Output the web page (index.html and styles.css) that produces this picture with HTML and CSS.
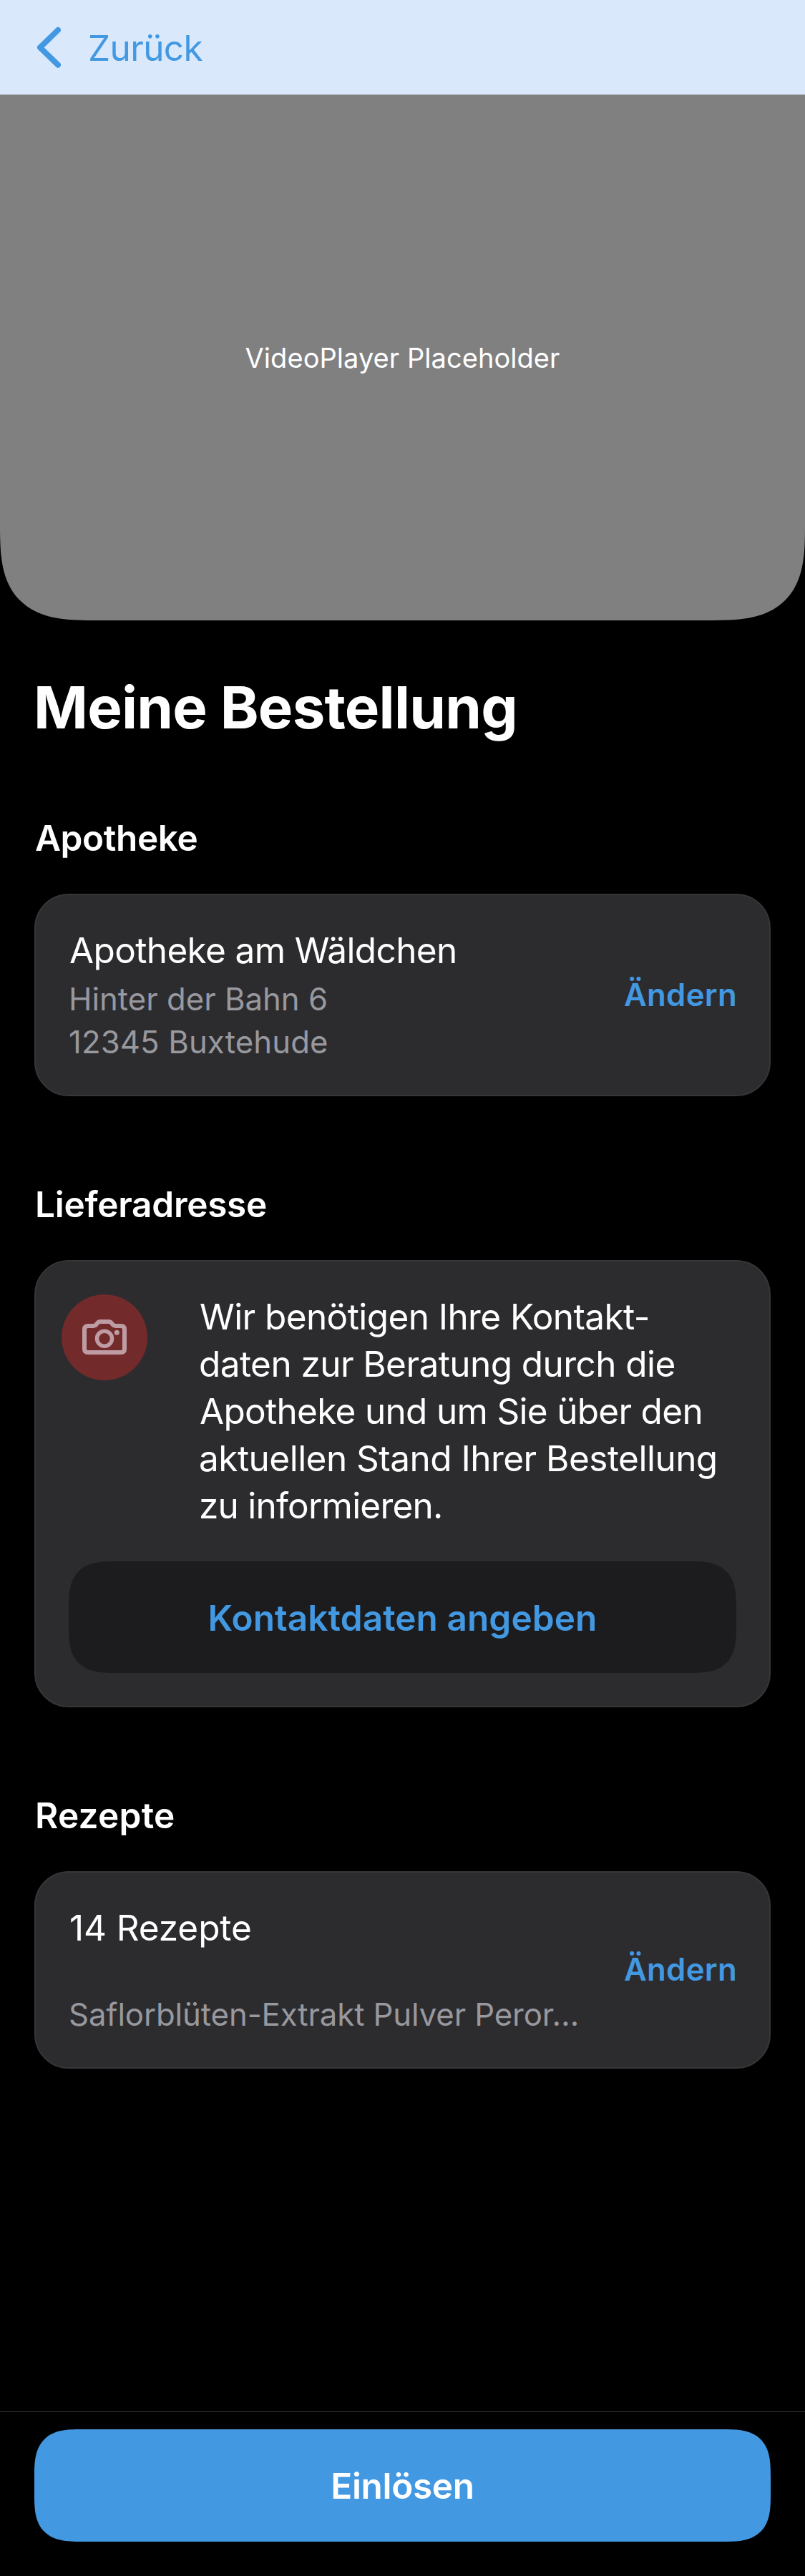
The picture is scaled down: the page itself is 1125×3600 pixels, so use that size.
FILE: index.html
```html
<!DOCTYPE html>
<html lang="de">
<head>
<meta charset="utf-8">
<title>Meine Bestellung</title>
<link rel="stylesheet" href="styles.css">
</head>
<body>
<header class="navbar">
  <svg class="chevron" viewBox="0 0 34 58" aria-hidden="true"><path d="M30 5 5 29.300 30 53.700"/></svg>
  <span class="back">Zurück</span>
</header>
<main class="content">
  <section class="video"><span class="video-label">VideoPlayer Placeholder</span></section>
  <h1 class="title">Meine Bestellung</h1>

  <h2 class="heading">Apotheke</h2>
  <section class="card pharmacy">
    <div class="info">
      <p class="name">Apotheke am Wäldchen</p>
      <p class="detail street">Hinter der Bahn 6</p>
      <p class="detail city">12345 Buxtehude</p>
    </div>
    <span class="change">Ändern</span>
  </section>

  <h2 class="heading delivery">Lieferadresse</h2>
  <section class="card contact">
    <div class="notice">
      <div class="avatar">
        <svg class="camera" viewBox="0 0 62 50" aria-hidden="true">
          <path d="M8 9H15.500C17.500 9 18.500 8.200 19.500 7L21.300 4.900C22.300 3.600 23.200 3 25 3H37C38.800 3 39.700 3.600 40.700 4.900L42.500 7C43.500 8.200 44.500 9 46.500 9H54Q59 9 59 14V41Q59 46 54 46H8Q3 46 3 41V14Q3 9 8 9Z"/>
          <circle class="lens" cx="31" cy="26.700" r="10.500"/>
          <circle class="dot" cx="48.300" cy="18.300" r="3.500"/>
        </svg>
      </div>
      <p class="message"><span class="l1">Wir benötigen Ihre Kontakt-</span><br><span class="l2">daten zur Beratung durch die</span><br><span class="l3">Apotheke und um Sie über den</span><br><span class="l4">aktuellen Stand Ihrer Bestellung</span><br><span class="l5">zu informieren.</span></p>
    </div>
    <div class="button secondary"><span class="contact-label">Kontaktdaten angeben</span></div>
  </section>

  <h2 class="heading prescriptions">Rezepte</h2>
  <section class="card recipes">
    <div class="info">
      <p class="name count">14 Rezepte</p>
      <p class="detail medicine">Saflorblüten-Extrakt Pulver Peror…</p>
    </div>
    <span class="change">Ändern</span>
  </section>
</main>
<footer class="footer">
  <div class="button primary"><span class="redeem">Einlösen</span></div>
</footer>
</body>
</html>
```
FILE: styles.css
```css
* { box-sizing: border-box; margin: 0; padding: 0; }

body {
  width: 1125px;
  height: 3600px;
  display: flex;
  flex-direction: column;
  background: #000;
  color: #fff;
  font: 400 49.5px/60px Inter, "Liberation Sans", sans-serif;
  white-space: nowrap;
}

.navbar {
  height: 133px;
  padding: 37px 0 0 51px;
  display: flex;
  gap: 38px;
  background: #d9e9fb;
  border-bottom: 1px solid #999b9e;
  color: #4398e2;
}
.chevron { width: 34px; height: 58px; flex: none; fill: none; stroke: #4398e2; stroke-width: 8; stroke-linecap: round; stroke-linejoin: round; }
.back { letter-spacing: -0.62px; }

.content { flex: 1; display: flex; flex-direction: column; }

.video {
  height: 734px;
  padding-bottom: 1px;
  display: flex;
  align-items: center;
  justify-content: center;
  background: #808080;
  border-radius: 0 0 130px 130px;
  corner-shape: superellipse(1.52);
}
.video-label { font-size: 38px; line-height: 48px; letter-spacing: 0.06px; }

.title { margin: 72px 47px 0; font-size: 81.5px; line-height: 100px; font-weight: 700; letter-spacing: -0.75px; }
.heading { margin: 102px 49px 48px; font-size: 49.5px; line-height: 60px; font-weight: 600; letter-spacing: -0.39px; }
.delivery { margin-top: 121px; letter-spacing: -0.27px; }
.prescriptions { margin-top: 121px; letter-spacing: 0.28px; }

.card {
  margin: 0 48px;
  background: #2c2c2e;
  border: 2px solid #363638;
  border-radius: 48px;
}
.pharmacy, .recipes { display: flex; align-items: center; justify-content: space-between; padding: 0 46px; }
.pharmacy { height: 283px; }
.recipes { height: 276px; }
.info { align-self: flex-start; padding-top: 47px; }
.name { padding-left: 1px; letter-spacing: -0.64px; }
.count { letter-spacing: -0.09px; }
.detail { font-size: 43.7px; line-height: 60px; color: #98989f; }
.street { margin-top: 9px; }
.city { letter-spacing: 0.12px; }
.medicine { margin-top: 62px; letter-spacing: -0.11px; }
.change { margin-right: -1px; font-size: 43.7px; line-height: 60px; font-weight: 600; letter-spacing: 0.32px; color: #4398e2; }

.contact { height: 625px; padding: 46px; }
.notice { display: flex; gap: 72px; margin-left: -10px; }
.avatar { width: 120px; height: 120px; flex: none; display: flex; align-items: center; justify-content: center; border-radius: 50%; background: #722a2b; }
.camera { width: 62px; height: 50px; fill: none; stroke: #be9ca4; stroke-width: 6; stroke-linejoin: round; }
.lens { stroke-width: 5.5; }
.dot { fill: #be9ca4; stroke: none; }
.message { margin-top: -2px; line-height: 66px; }
.l1 { margin-left: 1px; letter-spacing: -0.59px; }
.l2 { letter-spacing: -0.57px; }
.l3 { margin-left: 1px; letter-spacing: -0.7px; }
.l4 { letter-spacing: -0.52px; }
.l5 { letter-spacing: -0.77px; }

.button { display: flex; align-items: center; justify-content: center; border-radius: 65px; corner-shape: superellipse(1.52); font-weight: 600; }
.secondary { margin-top: 45px; height: 156px; padding-top: 2px; background: #1c1c1e; color: #4398e2; letter-spacing: 0.08px; }
.footer { height: 230px; padding: 24px 48px 0; border-top: 1px solid #38383a; }
.primary { height: 157px; background: #4398e2; letter-spacing: -0.32px; }
```
